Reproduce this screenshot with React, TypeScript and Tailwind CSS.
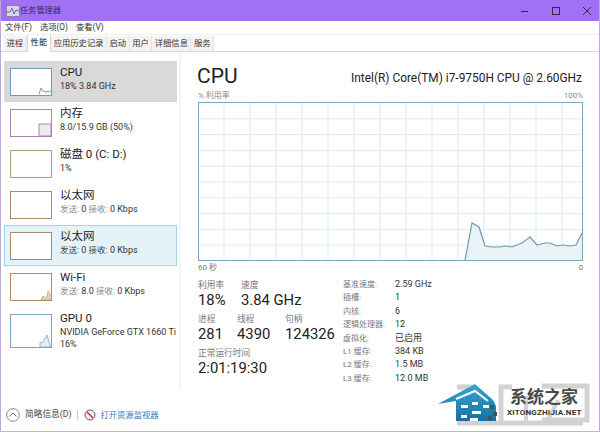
const FONT = "font-['Roboto','Noto_Sans_CJK_SC',sans-serif]";

const tabs = ["进程", "性能", "应用历史记录", "启动", "用户", "详细信息", "服务"];

const specs = [
  ["基准速度:", "2.59 GHz"],
  ["插槽:", "1"],
  ["内核:", "6"],
  ["逻辑处理器:", "12"],
  ["虚拟化:", "已启用"],
  ["L1 缓存:", "384 KB"],
  ["L2 缓存:", "1.5 MB"],
  ["L3 缓存:", "12.0 MB"],
];

const cpuLine =
  "266,157 273,120 280,124 286,143 293,144 301,144 306,143 313,144 323,140 331,134 338,142 346,140 351,140 358,143 364,142 371,143 377,142 383,130";

function Thumb({ border, children }: { border: string; children?: React.ReactNode }) {
  return (
    <div className={`h-[28px] w-[42px] shrink-0 border bg-white ${border}`}>
      <svg viewBox="0 0 40 26" className="h-full w-full">
        {children}
      </svg>
    </div>
  );
}

function SideItem({
  title,
  lines,
  thumb,
  className = "",
}: {
  title: string;
  lines: React.ReactNode[];
  thumb: React.ReactNode;
  className?: string;
}) {
  return (
    <div className={`flex h-[41px] items-start gap-[8px] border pl-[5px] pt-[6px] ${className}`}>
      {thumb}
      <div className="-mt-[4px] min-w-0">
        <div className="text-[11.5px] leading-[16px] whitespace-nowrap text-[#222]">{title}</div>
        {lines.map((line, i) => (
          <div key={i} className="text-[9px] leading-[12px] whitespace-nowrap text-[#333]">
            {line}
          </div>
        ))}
      </div>
    </div>
  );
}

function NetLine({ send, dim = true }: { send: string; dim?: boolean }) {
  const cn = dim ? "text-[8.5px] text-[#8a8a8a]" : "text-[8.5px] text-[#444]";
  return (
    <>
      <span className={cn}>发送:</span> {send} <span className={cn}>接收:</span> 0 Kbps
    </>
  );
}

function Stat({ label, value, width }: { label: string; value: string; width: string }) {
  return (
    <div className={width}>
      <div className="text-[8.7px] leading-[12px] text-[#777]">{label}</div>
      <div className="text-[14.8px] leading-[18px] whitespace-nowrap text-[#222]">{value}</div>
    </div>
  );
}

function CpuChart() {
  const xs = Array.from({ length: 14 }, (_, i) => 26 * (i + 1) - 1);
  const ys = Array.from({ length: 9 }, (_, i) => 15.8 * (i + 1));
  return (
    <div className="h-[159px] w-[385px] border border-[#7fa6b8] bg-white">
      <svg viewBox="0 0 383 157" className="h-full w-full">
        {xs.map((x) => (
          <line key={x} x1={x} x2={x} y1="0" y2="157" stroke="#dcebef" />
        ))}
        {ys.map((y) => (
          <line key={y} x1="0" x2="383" y1={y} y2={y} stroke="#dcebef" />
        ))}
        <polygon points={`${cpuLine} 383,157`} fill="#eaf2f8" />
        <polyline points={cpuLine} fill="none" stroke="#6f9db3" strokeWidth="1.2" />
      </svg>
    </div>
  );
}

// site watermark sitting over the bottom right corner
function Watermark() {
  return (
    <div className="pointer-events-none absolute right-0 bottom-0 h-[59px] w-[169px]">
      <svg viewBox="0 0 169 59" className="absolute inset-0 h-full w-full">
        <g fill="none" stroke="#d2d2d2" strokeWidth="5">
          <path d="M27 15H43M71 50V15H82M112 14H157V48H112M27 51H153" />
          <path d="M96 24V50M128 28L118 48" strokeWidth="4" />
        </g>
        <defs>
          <linearGradient id="wm" x1="0" y1="0" x2="0" y2="1">
            <stop offset="0" stopColor="#38a6d6" />
            <stop offset="1" stopColor="#17709f" />
          </linearGradient>
        </defs>
        <path d="M8 32L45 12L63 28L66 34L66 49H26L26 29Z" fill="url(#wm)" />
        <path d="M26 27L45 19L58 29" fill="none" stroke="#fff" strokeWidth="2" />
        <path d="M31 33h7v3h-7zM42 30h6v3h-6zM31 43h6v3h-6zM42 39h9v3h-9zM53 33h6v3h-6zM40 46h8v3h-8z" fill="#fff" />
        <path d="M60 33h4v4h-4zM63 40h4v4h-4zM58 44h4v4h-4z" fill="#44525a" />
      </svg>
      <div className="absolute top-[15px] left-[80px] text-[17px] leading-[20px] font-bold whitespace-nowrap text-[#4a4a4a]">
        系统之家
      </div>
      <div className="absolute top-[36px] left-[77px] text-[8px] leading-[10px] font-bold tracking-[0.2px] whitespace-nowrap text-[#333]">
        XITONGZHIJIA.NET
      </div>
    </div>
  );
}

export default function App() {
  return (
    <div className={`relative flex h-[432px] w-[600px] flex-col overflow-hidden border-x border-b border-x-[#b9a9d8] border-b-[#bdb6cf] bg-white ${FONT}`}>
      {/* title bar */}
      <div className="-mx-px flex h-[21px] shrink-0 items-center bg-[#a071f4] pl-[6px] text-[#3a2a55]">
        <svg viewBox="0 0 14 12" className="h-[12px] w-[14px]">
          <rect x="0.5" y="0.5" width="13" height="11" fill="#d9d2ea" stroke="#8c80a5" />
          <path d="M1 7 L4 7 L6 3 L8 9 L10 5 L13 6" fill="none" stroke="#4d7d9c" />
        </svg>
        <span className="text-[8.2px]">任务管理器</span>
        <div className="ml-auto flex items-center gap-[21px] pr-[6px] text-[#33264d]">
          <svg viewBox="0 0 10 10" className="h-[10px] w-[10px]">
            <path d="M1 5.5h7" stroke="currentColor" />
          </svg>
          <svg viewBox="0 0 10 10" className="h-[10px] w-[10px]">
            <rect x="1.5" y="1.5" width="7" height="7" fill="none" stroke="currentColor" />
          </svg>
          <svg viewBox="0 0 10 10" className="mr-[2px] h-[10px] w-[10px]">
            <path d="M1 1l8 8M9 1l-8 8" stroke="currentColor" />
          </svg>
        </div>
      </div>

      {/* menu */}
      <div className="flex h-[14px] shrink-0 items-center gap-[8px] border-b border-[#f0f0f0] pl-[4px] text-[8.3px] text-[#333]">
        <span>文件(F)</span>
        <span>选项(O)</span>
        <span>查看(V)</span>
      </div>

      {/* tabs */}
      <div className="flex h-[17px] shrink-0 items-end border-b border-[#d9d9d9] pl-[3px]">
        {tabs.map((t) => (
          <div
            key={t}
            className={
              t === "性能"
                ? "-mb-px h-[17px] border-x border-[#d9d9d9] bg-white px-[3px] text-[8.3px] leading-[15px] text-[#222]"
                : "h-[15px] border-r border-[#e3e3e3] bg-[#f3f3f3] px-[2.5px] text-[8.3px] leading-[15px] text-[#333]"
            }
          >
            {t}
          </div>
        ))}
      </div>

      {/* body */}
      <div className="flex min-h-0 flex-1">
        <div className="flex h-[338px] w-[180px] shrink-0 flex-col border-r-2 border-[#f4f4f4] pt-[9px] pl-[3px]">
          <div className="w-[173px]">
            <SideItem
              title="CPU"
              lines={["18% 3.84 GHz"]}
              className="border-[#d9d9d9] bg-[#d9d9d9]"
              thumb={
                <Thumb border="border-[#6f9db3]">
                  <polyline points="28,25 30,19 32,22 35,23 38,22 40,23" fill="none" stroke="#6f9db3" />
                </Thumb>
              }
            />
            <SideItem
              title="内存"
              lines={["8.0/15.9 GB (50%)"]}
              className="border-transparent"
              thumb={
                <Thumb border="border-[#a884ae]">
                  <path d="M28 26V14h12v12z" fill="#f3e8f5" stroke="#a884ae" />
                </Thumb>
              }
            />
            <SideItem title="磁盘 0 (C: D:)" lines={["1%"]} className="border-transparent" thumb={<Thumb border="border-[#8cae7d]" />} />
            <SideItem title="以太网" lines={[<NetLine send="0" />]} className="border-transparent" thumb={<Thumb border="border-[#a68a6c]" />} />
            <SideItem
              title="以太网"
              lines={[<NetLine send="0" dim={false} />]}
              className="border-[#a8d3e4] bg-[#e5f3f9]"
              thumb={<Thumb border="border-[#a68a6c]" />}
            />
            <SideItem
              title="Wi-Fi"
              lines={[<NetLine send="8.0" />]}
              className="border-transparent"
              thumb={
                <Thumb border="border-[#b08f5e]">
                  <path d="M30 26l2-4 2 2 2-1 1-6 2 3v6z" fill="#eadcc6" stroke="#b08f5e" strokeWidth="0.7" />
                </Thumb>
              }
            />
            <div className="h-[47px]">
              <SideItem
                title="GPU 0"
                lines={["NVIDIA GeForce GTX 1660 Ti", "16%"]}
                className="border-transparent"
                thumb={
                  <div className="h-[34px] w-[42px] shrink-0 border border-[#7fa6b8] bg-white">
                    <svg viewBox="0 0 40 32" className="h-full w-full">
                      <path d="M29 32v-4l3-1 4-7 3 10 1 2z" fill="#e3eef4" stroke="#7fa6b8" strokeWidth="0.8" />
                    </svg>
                  </div>
                }
              />
            </div>
          </div>
        </div>

        <div className="flex min-w-0 flex-1 flex-col pt-[8px] pl-[17px]">
          <div className="flex h-[33px] items-center">
            <span className="-ml-px text-[21px] text-[#222]">CPU</span>
            <span className="mt-[4px] mr-[17px] ml-auto text-[11.9px] whitespace-nowrap text-[#222]">
              Intel(R) Core(TM) i7-9750H CPU @ 2.60GHz
            </span>
          </div>
          <div className="-mt-[4px] flex h-[13px] w-[385px] items-end justify-between text-[8px] text-[#888]">
            <span>% 利用率</span>
            <span>100%</span>
          </div>
          <CpuChart />
          <div className="flex h-[13px] w-[385px] items-center justify-between text-[8px] text-[#777]">
            <span>60 秒</span>
            <span>0</span>
          </div>
          <div className="mt-[5px] flex">
            <div className="w-[145px]">
              <div className="flex">
                <Stat label="利用率" value="18%" width="w-[43px]" />
                <Stat label="速度" value="3.84 GHz" width="w-[90px]" />
              </div>
              <div className="mt-[4px] flex">
                <Stat label="进程" value="281" width="w-[39px]" />
                <Stat label="线程" value="4390" width="w-[48px]" />
                <Stat label="句柄" value="124326" width="w-[58px]" />
              </div>
              <div className="mt-[4px]">
                <Stat label="正常运行时间" value="2:01:19:30" width="w-[120px]" />
              </div>
            </div>
            <div className="-mt-px grid h-[107px] grid-cols-[52px_1fr] text-[9px] leading-[13.3px]">
              {specs.map(([k, v]) => (
                <div key={k} className="contents">
                  <span className="text-[8px] whitespace-nowrap text-[#777]">{k}</span>
                  <span className="text-[#333]">{v}</span>
                </div>
              ))}
            </div>
          </div>
        </div>
      </div>

      {/* footer */}
      <div className="flex h-[30px] shrink-0 items-center pb-[2px] pl-[5px] text-[8.7px]">
        <svg viewBox="0 0 14 14" className="h-[14px] w-[14px]">
          <circle cx="7" cy="7" r="6.3" fill="none" stroke="#888" />
          <path d="M3.5 8.5L7 5l3.5 3.5" fill="none" stroke="#777" />
        </svg>
        <span className="ml-[5px] text-[#444]">简略信息(D)</span>
        <span className="mx-[6px] h-[10px] w-px bg-[#ccc]" />
        <svg viewBox="0 0 12 12" className="h-[12px] w-[12px]">
          <circle cx="6" cy="6" r="5" fill="#f3eeee" stroke="#77595c" />
          <path d="M3 3l6 6" stroke="#c0392b" strokeWidth="1.4" />
        </svg>
        <span className="ml-[4px] text-[8.3px] text-[#2b79c2]">打开资源监视器</span>
      </div>

      <Watermark />
    </div>
  );
}
